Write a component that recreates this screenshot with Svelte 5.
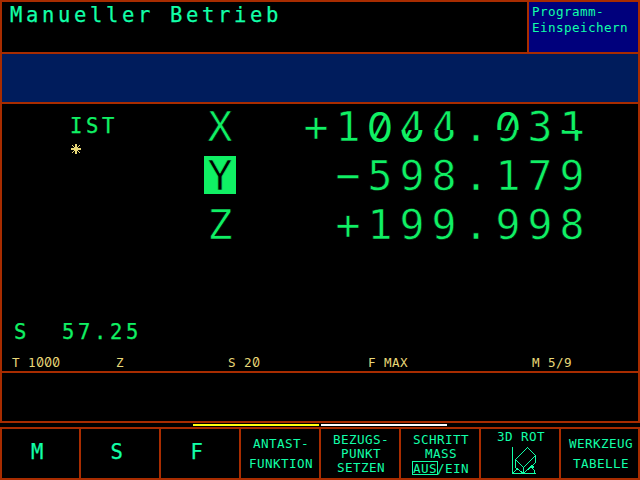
<script>
  // low: digit still visible in the lower half of a cell while the value is changing
  const axes = [
    { name: 'X', value: '+1044.031', low: { 3: '0', 4: '8', 6: '9', 8: '4' } },
    { name: 'Y', value: '−598.179', low: {}, active: true },
    { name: 'Z', value: '+199.998', low: {} }
  ];
  const status = [
    { text: 'T 1000', width: 104 },
    { text: 'Z', width: 112 },
    { text: 'S 20', width: 140 },
    { text: 'F MAX', width: 164 },
    { text: 'M 5/9', width: 96 }
  ];
</script>

{#snippet digits(text)}{#each text.split(/(0)/) as part}{#if part === '0'}<span class="zero">0</span>{:else}{part}{/if}{/each}{/snippet}

<div class="screen">
  <section class="display">
    <header>
      <h1 class="mid">Manueller Betrieb</h1>
      <div class="mode small"><div>Programm-</div><div>Einspeichern</div></div>
    </header>
    <div class="message"></div>
    <main>
      <div class="positions">
        <div class="kind">
          <div class="mid">IST</div>
          <svg width="10" height="10" viewBox="0 0 10 10" shape-rendering="crispEdges" fill="#e8d878">
            <path d="M4 0h2v10h-2zM0 4h10v2h-10zM3 3h4v4h-4zM1 1h1v1h1v1h-1v-1h-1zM8 1h1v1h-1v1h-1v-1h1zM2 7h1v1h-1v1h-1v-1h1zM7 7h1v1h1v1h-1v-1h-1z" />
          </svg>
        </div>
        <div class="axes">
          {#each axes as a}
            <div class="axis">
              <span class="name big" class:active={a.active}>{a.name}</span>
              <span class="value big">
                {#each [...a.value] as ch, i}<span class="cell" class:slashed={ch === '0'} class:split={a.low[i]} class:lowzero={a.low[i] === '0'} data-low={a.low[i]}><span class="glyph">{ch}</span></span>{/each}
              </span>
            </div>
          {/each}
        </div>
      </div>
      <div class="spindle mid">S  57.25</div>
      <div class="status small">
        {#each status as s}<span style="width:{s.width}px">{@render digits(s.text)}</span>{/each}
      </div>
    </main>
    <div class="input"></div>
  </section>
  <div class="pages"><i></i><i class="white"></i></div>
  <nav>
    <div class="key single mid"><div>M</div></div>
    <div class="key single mid"><div>S</div></div>
    <div class="key single mid"><div>F</div></div>
    <div class="key two small"><div>ANTAST-</div><div>FUNKTION</div></div>
    <div class="key three small"><div>BEZUGS-</div><div>PUNKT</div><div>SETZEN</div></div>
    <div class="key three small"><div>SCHRITT</div><div>MASS</div><div class="toggle"><span class="boxed">AUS</span>/EIN</div></div>
    <div class="key rot small">
      <div>3D ROT</div>
      <svg width="25" height="28" viewBox="0 0 25 28" fill="none" stroke="#12ffa8" shape-rendering="crispEdges">
        <path d="M.5 0V27M0 26.5H24M15.5 .5L23.5 8.5L11.5 20.5L3.5 12.5ZM3.5 12.5V20.5L11.5 26.5V20.5M23.5 8.5V15.5L11.5 26.5M1 26L6 21" />
        <path d="M20.5 18.5V21.5L22.5 23.5V26M18.5 21.5L20.5 18.5L22.5 21.5M19 20.5h3" />
      </svg>
    </div>
    <div class="key two small last"><div>WERKZEUG</div><div>TABELLE</div></div>
  </nav>
</div>

<style>
  :global(body) { background: #000; }
  .screen {
    width: 640px; height: 480px; overflow: hidden; background: #000;
    font-family: "DejaVu Sans Mono", monospace; color: #12ffa8;
    display: flex; flex-direction: column;
  }
  .screen * { box-sizing: border-box; }
  .display { height: 423px; border: 2px solid #a82c00; display: flex; flex-direction: column; }
  .small { --pitch: 8px; font-size: 12.6px; line-height: 16px; letter-spacing: calc(8px - .602em); }
  .mid { font-size: 20.5px; line-height: 20px; letter-spacing: calc(16px - .602em); font-weight: 400; -webkit-text-stroke: .25px currentColor; }
  .big { font-size: 41.5px; line-height: 38px; -webkit-text-stroke: .6px #000; }
  header { height: 52px; display: flex; border-bottom: 2px solid #a82c00; }
  h1 { margin: 0; width: 525px; padding: 3px 0 0 8px; }
  .mode { flex: 1; border-left: 2px solid #a82c00; background: #00007c; padding: 2px 0 0 3px; }
  .message { height: 50px; background: #001c5c; border-bottom: 2px solid #a82c00; }
  main { height: 269px; border-bottom: 2px solid #a82c00; color: #10f064; }
  .positions { display: flex; height: 210px; padding-top: 3px; }
  .kind { width: 202px; padding: 9px 0 0 68px; }
  .kind svg { display: block; margin: 8px 0 0 1px; }
  .axis { display: flex; height: 49px; align-items: flex-start; }
  .name { width: 32px; height: 38px; text-align: center; line-height: 40px; }
  .active { background: #10f064; color: #000; -webkit-text-stroke-color: #10f064; }
  .value { width: 352px; height: 38px; display: flex; justify-content: flex-end; line-height: 40px; }
  .cell { position: relative; width: 32px; height: 38px; text-align: center; }
  .glyph { display: block; height: 38px; }
  .slashed .glyph, .lowzero::after { font-family: Inter, sans-serif; font-feature-settings: "zero", "tnum"; font-weight: 400; -webkit-text-stroke: 0; }
  .split .glyph { clip-path: inset(0 0 15px 0); }
  .split::after { content: attr(data-low); position: absolute; inset: 0; text-align: center; clip-path: inset(23px 0 0 0); }
  .zero { display: inline-block; width: .602em; margin-right: calc(var(--pitch) - .602em); letter-spacing: 0; font-family: Inter, sans-serif; font-feature-settings: "zero", "tnum"; line-height: 0; }
  .spindle { padding-left: 12px; margin-top: 8px; white-space: pre; }
  .status { display: flex; padding-left: 10px; margin-top: 13px; color: #e8d878; }
  .input { flex: 1; }
  .pages { height: 4px; padding: 1px 0 0 193px; display: flex; gap: 2px; }
  .pages i { width: 126px; height: 2px; background: #ffff10; }
  .pages .white { background: #fff; }
  nav { height: 53px; border: 2px solid #a82c00; display: grid; grid-template-columns: 79px repeat(6, 80px) 77px; }
  .key { border-right: 2px solid #a82c00; text-align: center; padding-left: 2px; }
  .single { padding: 13px 3px 0 0; }
  .two { padding-top: 5px; line-height: 20px; }
  .two div { height: 20px; }
  .key.last { border-right: 0; padding-left: 3px; }
  .three { padding-top: 4px; line-height: 14px; }
  .three div { height: 14px; }
  .toggle { margin-top: 1px; }
  .boxed { display: inline-block; height: 12px; line-height: 13px; outline: 1px solid #12ffa8; }
  .rot svg { display: block; margin: 2px 0 0 29px; }
  .rot div { height: 16px; }
</style>
